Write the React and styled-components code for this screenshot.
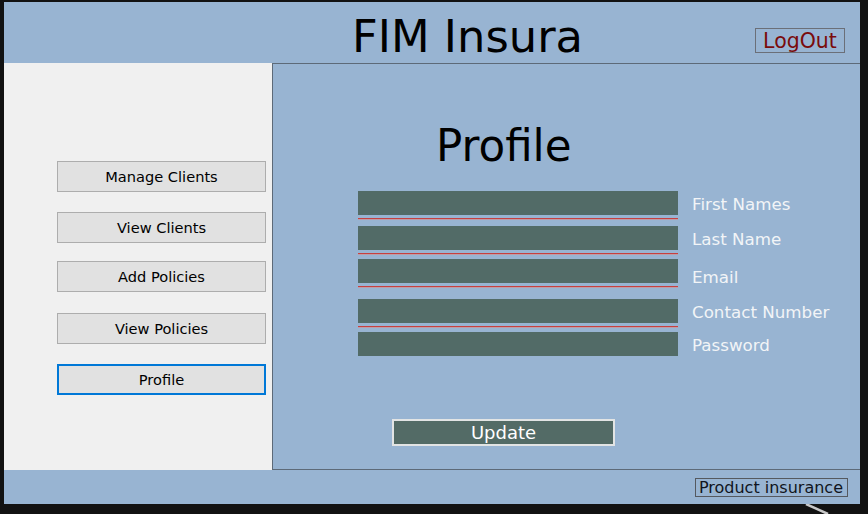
import React from "react";
import styled, { createGlobalStyle } from "styled-components";

const Global = createGlobalStyle`
  html, body { margin: 0; padding: 0; background: #121212; }
  body { width: 868px; height: 514px; overflow: hidden; font-family: "DejaVu Sans", "Noto Sans", sans-serif; }
  #root { position: relative; }
`;

const Desk = styled.div`
  position: relative;
  width: 868px;
  height: 514px;
  padding: 2px 0 0 4px;
  box-sizing: border-box;
`;

const Window = styled.div`
  width: 856px;
  height: 502px;
  display: flex;
  flex-direction: column;
  background: #98b4d2;
`;

const Header = styled.header`
  height: 61px;
  flex: none;
  display: flex;
  align-items: flex-start;
  background: #98b4d2;
`;

const Title = styled.h1`
  margin: 13px 0 0 348px;
  font-size: 44.8px;
  line-height: 44px;
  font-weight: normal;
  color: #000;
`;

const LogOut = styled.button`
  margin: 26px 15px 0 auto;
  width: 90px;
  height: 25px;
  padding: 0;
  background: transparent;
  border: 1px solid #6b6f78;
  color: #7a0b0b;
  font-family: "DejaVu Sans", sans-serif;
  font-size: 20.5px;
  line-height: 22px;
`;

const Main = styled.div`
  height: 407px;
  flex: none;
  display: flex;
`;

const Sidebar = styled.nav`
  width: 268px;
  flex: none;
  background: #f0f0f0;
  display: flex;
  flex-direction: column;
  padding: 98px 0 0 53px;
  box-sizing: border-box;
  gap: 20px;
`;

const NavButton = styled.button`
  width: 209px;
  height: 31px;
  flex: none;
  margin-top: ${(p) => p.$shift || 0}px;
  box-sizing: border-box;
  background: #e1e1e1;
  border: ${(p) => (p.$active ? "2px solid #0078d7" : "1px solid #adadad")};
  color: #000;
  font-family: "DejaVu Sans", sans-serif;
  font-size: 14.6px;
  padding: 0;
`;

const Panel = styled.section`
  flex: 1;
  background: #98b4d2;
  border: 1px solid #5d6a78;
  border-right: none;
  display: flex;
  flex-direction: column;
  padding: 0 0 0 85px;
`;

const Heading = styled.h2`
  margin: 60px 0 0 78px;
  font-size: 43.6px;
  line-height: 44px;
  font-weight: normal;
  color: #000;
`;

const Form = styled.div`
  display: flex;
  flex-direction: column;
  margin-top: 23px;
`;

const Row = styled.div`
  display: flex;
  align-items: flex-start;
  gap: 14px;
  margin-top: ${(p) => p.$gap}px;
`;

const Field = styled.div`
  width: 320px;
  display: flex;
  flex-direction: column;
`;

const Input = styled.input`
  width: 320px;
  height: 24px;
  box-sizing: border-box;
  background: #526b67;
  border: none;
  outline: none;
  padding: 0 4px;
  color: #fff;
  font-family: "DejaVu Sans", sans-serif;
  font-size: 14px;
`;

const Underline = styled.div`
  height: 1px;
  margin-top: 3px;
  background: #c6403f;
  box-shadow: 0 1px 0 rgba(214, 140, 140, 0.6);
`;

const Label = styled.label`
  color: #f2f4f7;
  font-size: 16.7px;
  line-height: 24px;
  margin-top: ${(p) => 1 + (p.$drop || 0)}px;
  margin-bottom: ${(p) => -(1 + (p.$drop || 0))}px;
`;

const UpdateButton = styled.button`
  margin: 63px 0 0 34px;
  width: 223px;
  height: 27px;
  box-sizing: border-box;
  background: #536b66;
  border: 2px solid #e2e4e4;
  color: #fff;
  font-family: "DejaVu Sans", sans-serif;
  font-size: 18px;
  line-height: 20px;
  padding: 0;
`;

const Footer = styled.footer`
  height: 34px;
  flex: none;
  display: flex;
  justify-content: flex-end;
  align-items: flex-start;
  background: #98b4d2;
`;

const Tag = styled.div`
  margin: 8px 12px 0 0;
  height: 19px;
  box-sizing: border-box;
  padding: 0 4px 0 3px;
  border: 1px solid #55595f;
  color: #101420;
  font-size: 16px;
  line-height: 17px;
`;

const Streak = styled.svg`
  position: absolute;
  left: 800px;
  top: 504px;
`;

const fields = [
  { label: "First Names", gap: 0, line: true },
  { label: "Last Name", gap: 7, line: true },
  { label: "Email", gap: 5, line: true, drop: 5 },
  { label: "Contact Number", gap: 12, line: true },
  { label: "Password", gap: 5, line: false },
];

const nav = [
  { label: "Manage Clients", shift: 0 },
  { label: "View Clients", shift: 0 },
  { label: "Add Policies", shift: -2 },
  { label: "View Policies", shift: 1 },
  { label: "Profile", shift: 0, active: true },
];

export default function App() {
  return (
    <>
      <Global />
      <Desk>
        <Window>
          <Header>
            <Title>FIM Insura</Title>
            <LogOut>LogOut</LogOut>
          </Header>
          <Main>
            <Sidebar>
              {nav.map((n) => (
                <NavButton key={n.label} $shift={n.shift} $active={n.active}>
                  {n.label}
                </NavButton>
              ))}
            </Sidebar>
            <Panel>
              <Heading>Profile</Heading>
              <Form>
                {fields.map((f) => (
                  <Row key={f.label} $gap={f.gap}>
                    <Field>
                      <Input type={f.label === "Password" ? "password" : "text"} />
                      {f.line && <Underline />}
                    </Field>
                    <Label $drop={f.drop}>{f.label}</Label>
                  </Row>
                ))}
              </Form>
              <UpdateButton>Update</UpdateButton>
            </Panel>
          </Main>
          <Footer>
            <Tag>Product insurance</Tag>
          </Footer>
        </Window>
        <Streak width="40" height="10" viewBox="0 0 40 10">
          <path d="M6 0 L28 10" stroke="#c8c8c8" strokeWidth="2.5" />
        </Streak>
      </Desk>
    </>
  );
}
